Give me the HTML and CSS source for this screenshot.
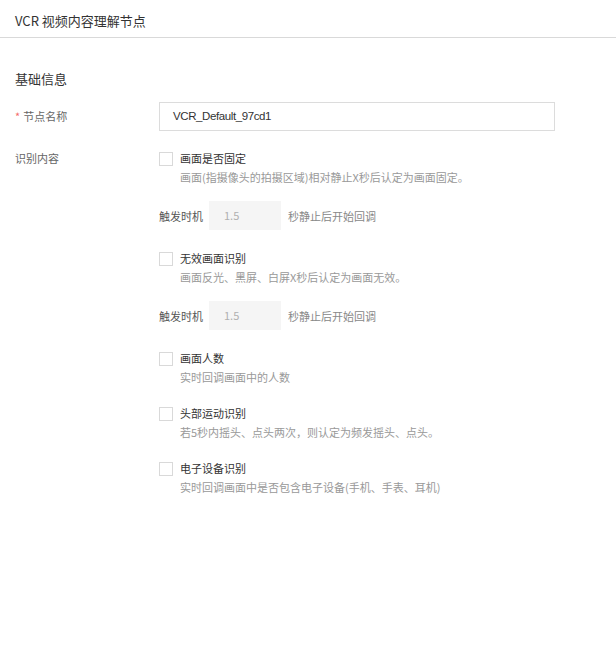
FILE: index.html
```html
<!DOCTYPE html>
<html lang="zh-CN">
<head>
<meta charset="utf-8">
<title>VCR 视频内容理解节点</title>
<link rel="stylesheet" href="styles.css">
</head>
<body>
<div class="header"><span class="title">VCR 视频内容理解节点</span></div>
<div class="content">
  <div class="section-title">基础信息</div>
  <div class="form-row name-row">
    <div class="label"><span class="req">*</span>节点名称</div>
    <div class="field"><div class="text-input">VCR_Default_97cd1</div></div>
  </div>
  <div class="form-row detect-row">
    <div class="label">识别内容</div>
    <div class="field">
      <div class="option first">
        <div class="opt-line"><span class="checkbox"></span><span class="opt-label">画面是否固定</span></div>
        <div class="opt-desc">画面(指摄像头的拍摄区域)相对静止X秒后认定为画面固定。</div>
      </div>
      <div class="trigger">
        <span class="trig-label">触发时机</span>
        <div class="num-input">1.5</div>
        <span class="trig-suffix">秒静止后开始回调</span>
      </div>
      <div class="option after-trigger">
        <div class="opt-line"><span class="checkbox"></span><span class="opt-label">无效画面识别</span></div>
        <div class="opt-desc">画面反光、黑屏、白屏X秒后认定为画面无效。</div>
      </div>
      <div class="trigger">
        <span class="trig-label">触发时机</span>
        <div class="num-input">1.5</div>
        <span class="trig-suffix">秒静止后开始回调</span>
      </div>
      <div class="option after-trigger">
        <div class="opt-line"><span class="checkbox"></span><span class="opt-label">画面人数</span></div>
        <div class="opt-desc">实时回调画面中的人数</div>
      </div>
      <div class="option">
        <div class="opt-line"><span class="checkbox"></span><span class="opt-label">头部运动识别</span></div>
        <div class="opt-desc">若5秒内摇头、点头两次，则认定为频发摇头、点头。</div>
      </div>
      <div class="option">
        <div class="opt-line"><span class="checkbox"></span><span class="opt-label">电子设备识别</span></div>
        <div class="opt-desc">实时回调画面中是否包含电子设备(手机、手表、耳机)</div>
      </div>
    </div>
  </div>
</div>
</body>
</html>
```

FILE: styles.css
```css
html, body {
  margin: 0;
  padding: 0;
  background: #ffffff;
}
body {
  font-family: "Noto Sans CJK SC", "Noto Sans", sans-serif;
  color: #333333;
  width: 616px;
}
.header {
  height: 38px;
  box-sizing: border-box;
  padding: 4px 0 0 15px;
  display: flex;
  align-items: center;
  border-bottom: 1px solid #d9d9d9;
}
.title {
  font-size: 13px;
  color: #333333;
}
.content {
  padding-left: 15px;
}
.section-title {
  font-size: 13px;
  line-height: 20px;
  margin-top: 31px;
  color: #333333;
}
.form-row {
  display: flex;
}
.name-row {
  margin-top: 13px;
  align-items: center;
}
.detect-row {
  margin-top: 18px;
  align-items: flex-start;
}
.label {
  width: 144px;
  flex: none;
  font-size: 11px;
  line-height: 19px;
  color: #666666;
}
.req {
  color: #f56c6c;
  margin-right: 3px;
}
.text-input {
  width: 396px;
  height: 29px;
  box-sizing: border-box;
  border: 1px solid #dcdcdc;
  padding: 0 13px;
  font-family: "Liberation Sans", "Noto Sans CJK SC", sans-serif;
  font-size: 11.5px;
  letter-spacing: -0.4px;
  line-height: 27px;
  color: #333333;
}
.option {
  margin-top: 17px;
}
.option.first {
  margin-top: 0;
}
.option.after-trigger {
  margin-top: 19px;
}
.opt-line {
  display: flex;
  align-items: center;
  height: 19px;
}
.checkbox {
  width: 14px;
  height: 14px;
  box-sizing: border-box;
  border: 1px solid #d9d9d9;
  background: #ffffff;
  margin-right: 7px;
  flex: none;
}
.opt-label {
  font-size: 11px;
  line-height: 19px;
  color: #333333;
}
.opt-desc {
  font-size: 11px;
  line-height: 19px;
  color: #999999;
  padding-left: 21px;
}
.trigger {
  margin-top: 14px;
  display: flex;
  align-items: center;
  height: 29px;
}
.trig-label {
  font-size: 11px;
  color: #555555;
  width: 50px;
}
.num-input {
  width: 72px;
  height: 29px;
  box-sizing: border-box;
  background: #f5f5f5;
  padding-left: 15px;
  font-size: 11px;
  line-height: 29px;
  color: #b0b0b0;
}
.trig-suffix {
  font-size: 11px;
  color: #888888;
  margin-left: 7px;
}
```
